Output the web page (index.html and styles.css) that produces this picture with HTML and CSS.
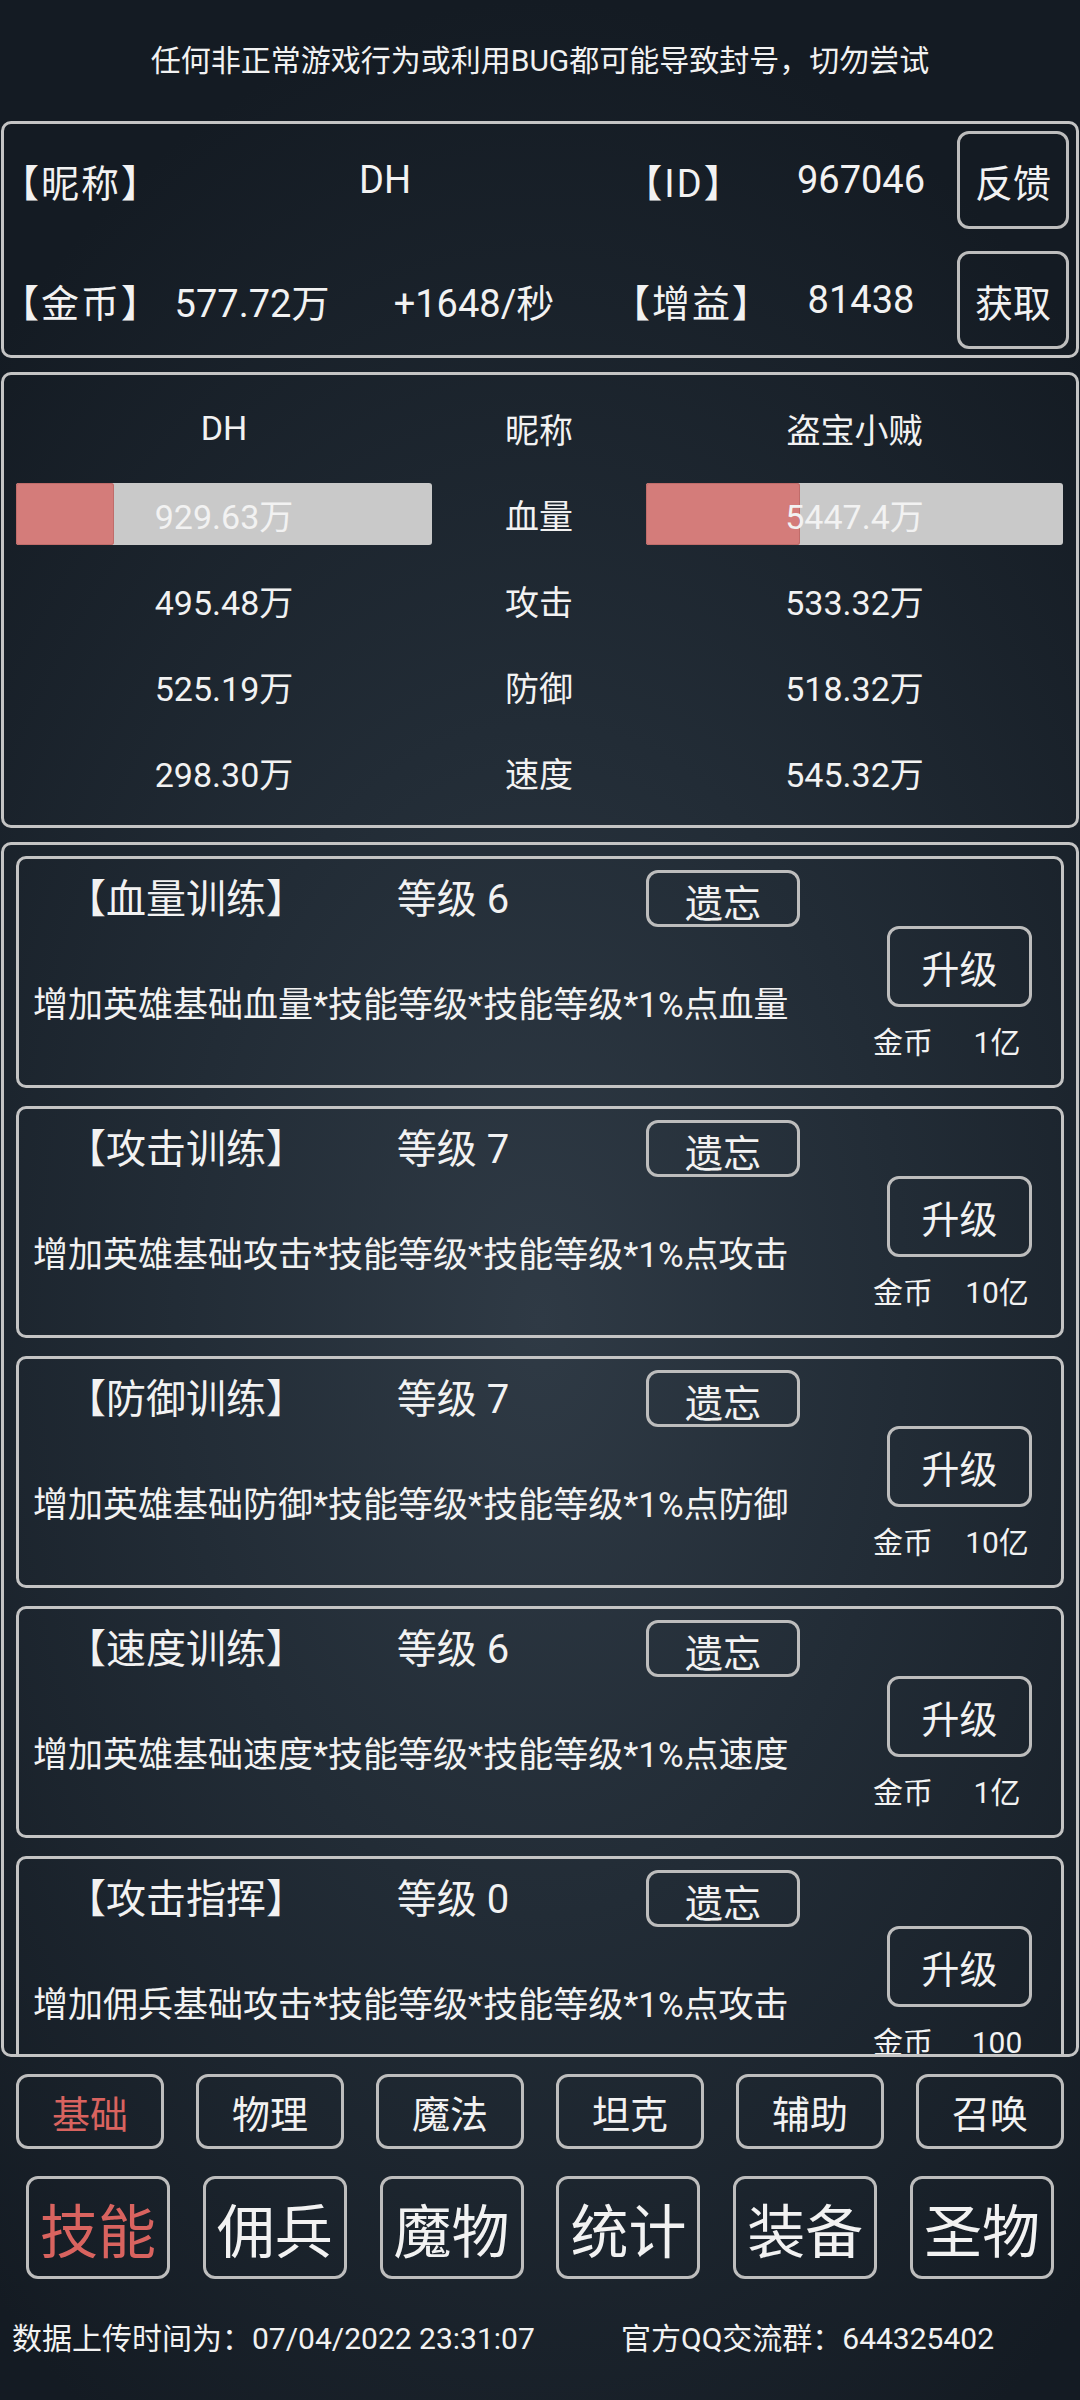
FILE: index.html
```html
<!DOCTYPE html>
<html lang="zh-CN">
<head>
    <meta charset="UTF-8">
    <meta name="viewport" content="width=device-width, initial-scale=1.0">
    <title>技能</title>
    <link rel="stylesheet" href="styles.css">
</head>
<body>
    <div class="notice">任何非正常游戏行为或利用BUG都可能导致封号，切勿尝试</div>

    <div class="panel info">
        <div class="info-row">
            <span class="label">【昵称】</span>
            <span class="val span2">DH</span>
            <span class="label mid">【ID】</span>
            <span class="val num">967046</span>
            <button class="btn side">反馈</button>
        </div>
        <div class="info-row">
            <span class="label">【金币】</span>
            <span class="val">577.72万</span>
            <span class="val">+1648/秒</span>
            <span class="label mid">【增益】</span>
            <span class="val num">81438</span>
            <button class="btn side">获取</button>
        </div>
    </div>

    <div class="panel stats">
        <div class="stat-row">
            <span>DH</span>
            <span>昵称</span>
            <span>盗宝小贼</span>
        </div>
        <div class="stat-row">
            <div class="bar"><div class="fill" style="width: 23.6%;"></div><span>929.63万</span></div>
            <span>血量</span>
            <div class="bar"><div class="fill" style="width: 37%;"></div><span>5447.4万</span></div>
        </div>
        <div class="stat-row">
            <span>495.48万</span>
            <span>攻击</span>
            <span>533.32万</span>
        </div>
        <div class="stat-row">
            <span>525.19万</span>
            <span>防御</span>
            <span>518.32万</span>
        </div>
        <div class="stat-row">
            <span>298.30万</span>
            <span>速度</span>
            <span>545.32万</span>
        </div>
    </div>

    <div class="panel skills">
        <div class="skill">
            <div class="skill-head">
                <span class="skill-name">【血量训练】</span>
                <span class="skill-lv">等级 6</span>
                <button class="btn forget">遗忘</button>
            </div>
            <div class="skill-body">
                <p class="skill-desc">增加英雄基础血量*技能等级*技能等级*1%点血量</p>
                <div class="skill-up">
                    <button class="btn up">升级</button>
                    <div class="cost"><span>金币</span><span>1亿</span></div>
                </div>
            </div>
        </div>

        <div class="skill">
            <div class="skill-head">
                <span class="skill-name">【攻击训练】</span>
                <span class="skill-lv">等级 7</span>
                <button class="btn forget">遗忘</button>
            </div>
            <div class="skill-body">
                <p class="skill-desc">增加英雄基础攻击*技能等级*技能等级*1%点攻击</p>
                <div class="skill-up">
                    <button class="btn up">升级</button>
                    <div class="cost"><span>金币</span><span>10亿</span></div>
                </div>
            </div>
        </div>

        <div class="skill">
            <div class="skill-head">
                <span class="skill-name">【防御训练】</span>
                <span class="skill-lv">等级 7</span>
                <button class="btn forget">遗忘</button>
            </div>
            <div class="skill-body">
                <p class="skill-desc">增加英雄基础防御*技能等级*技能等级*1%点防御</p>
                <div class="skill-up">
                    <button class="btn up">升级</button>
                    <div class="cost"><span>金币</span><span>10亿</span></div>
                </div>
            </div>
        </div>

        <div class="skill">
            <div class="skill-head">
                <span class="skill-name">【速度训练】</span>
                <span class="skill-lv">等级 6</span>
                <button class="btn forget">遗忘</button>
            </div>
            <div class="skill-body">
                <p class="skill-desc">增加英雄基础速度*技能等级*技能等级*1%点速度</p>
                <div class="skill-up">
                    <button class="btn up">升级</button>
                    <div class="cost"><span>金币</span><span>1亿</span></div>
                </div>
            </div>
        </div>

        <div class="skill">
            <div class="skill-head">
                <span class="skill-name">【攻击指挥】</span>
                <span class="skill-lv">等级 0</span>
                <button class="btn forget">遗忘</button>
            </div>
            <div class="skill-body">
                <p class="skill-desc">增加佣兵基础攻击*技能等级*技能等级*1%点攻击</p>
                <div class="skill-up">
                    <button class="btn up">升级</button>
                    <div class="cost"><span>金币</span><span>100</span></div>
                </div>
            </div>
        </div>
    </div>

    <div class="tabs sub">
        <button class="btn active">基础</button>
        <button class="btn">物理</button>
        <button class="btn">魔法</button>
        <button class="btn">坦克</button>
        <button class="btn">辅助</button>
        <button class="btn">召唤</button>
    </div>

    <div class="tabs main">
        <button class="btn active">技能</button>
        <button class="btn">佣兵</button>
        <button class="btn">魔物</button>
        <button class="btn">统计</button>
        <button class="btn">装备</button>
        <button class="btn">圣物</button>
    </div>

    <div class="footer">
        <span>数据上传时间为：07/04/2022 23:31:07</span>
        <span>官方QQ交流群：644325402</span>
    </div>
</body>
</html>
```

FILE: styles.css
```css
* {
    box-sizing: border-box;
}

body {
    margin: 0;
    padding: 0 1px;
    height: 2400px;
    overflow: hidden;
    font-family: Roboto, "Noto Sans CJK SC", sans-serif;
    color: #f2f2f2;
    background: radial-gradient(ellipse 75% 55% at 50% 55%, #2f3a45 0%, #222c36 45%, #141b23 100%);
    background-color: #141b23;
}

.notice {
    height: 121px;
    padding-bottom: 6px;
    display: flex;
    align-items: center;
    justify-content: center;
    font-size: 30px;
}

.panel {
    border: 3px solid #c4c4c4;
    border-radius: 10px;
}

.btn {
    font-family: inherit;
    color: #f2f2f2;
    background: transparent;
    border: 3px solid #bdbdbd;
    border-radius: 12px;
    padding: 0;
    cursor: pointer;
}

.btn.active {
    color: #d9635f;
}

/* 顶部信息 */
.info {
    padding: 7px 7px 6px 0;
    display: flex;
    flex-direction: column;
    gap: 22px;
}

.info-row {
    height: 98px;
    display: grid;
    grid-template-columns: 164px 168px 276px 144px 1fr 112px;
    align-items: center;
    font-size: 38px;
}

.info-row .label {
    margin-left: -3px;
    letter-spacing: 2px;
}

.info-row .mid {
    margin-left: 0;
}

.info-row .mid,
.info-row .val {
    text-align: center;
}

.info-row .span2 {
    grid-column: span 2;
    padding-right: 10px;
}

.info-row .num {
    padding-left: 9px;
}

.btn.side {
    height: 98px;
    font-size: 38px;
}

/* 属性对比 */
.stats {
    margin-top: 14px;
    padding: 10px 13px 10px 12px;
}

.stat-row {
    height: 86px;
    display: grid;
    grid-template-columns: 416px 1fr 417px;
    align-items: center;
    text-align: center;
    font-size: 34px;
}

.bar {
    position: relative;
    height: 62px;
    background-color: #c9c9c9;
    border-radius: 3px;
    display: flex;
    align-items: center;
    justify-content: center;
}

.bar .fill {
    position: absolute;
    left: 0;
    top: 0;
    bottom: 0;
    background-color: #d47c7a;
    border-radius: 3px;
    box-shadow: inset 0 0 0 1px #c06c6a;
}

.bar span {
    position: relative;
    color: #f2f2f2;
}

/* 技能列表 */
.skills {
    margin-top: 14px;
    height: 1215px;
    overflow: hidden;
    padding: 11px 12px 0;
    display: flex;
    flex-direction: column;
    gap: 18px;
}

.skill {
    flex: none;
    height: 232px;
    border: 3px solid #c4c4c4;
    border-radius: 10px;
    display: flex;
    flex-direction: column;
}

.skill-head {
    padding-top: 8px;
    height: 65px;
    display: grid;
    grid-template-columns: 334px 200px 154px;
    align-items: center;
    text-align: center;
    font-size: 40px;
}

.skill-name,
.skill-lv {
    margin-bottom: 5px;
}

.btn.forget {
    margin-left: 93px;
    width: 154px;
    height: 57px;
    font-size: 38px;
}

.skill-head .btn.forget {
    grid-column: 3;
}

.skill-body {
    flex: 1;
    display: flex;
    align-items: center;
    justify-content: space-between;
}

.skill-desc {
    margin: 0 0 6px;
    padding-left: 14px;
    font-size: 35px;
}

.skill-up {
    align-self: flex-start;
    width: 188px;
    margin-right: 17px;
    padding-top: 2px;
    display: flex;
    flex-direction: column;
    align-items: flex-end;
}

.btn.up {
    width: 145px;
    height: 81px;
    margin-right: 12px;
    font-size: 38px;
}

.cost {
    margin-top: 18px;
    width: 100%;
    display: grid;
    grid-template-columns: 94px 94px;
    text-align: center;
    font-size: 30px;
    line-height: 36px;
}

/* 底部标签 */
.tabs {
    display: flex;
    justify-content: space-between;
}

.tabs.sub {
    margin-top: 17px;
    padding: 0 15px;
}

.tabs.sub .btn {
    width: 148px;
    height: 75px;
    font-size: 38px;
}

.tabs.main {
    margin-top: 27px;
    padding: 0 25px;
}

.tabs.main .btn {
    width: 144px;
    height: 103px;
    font-size: 58px;
}

.footer {
    margin-top: 40px;
    padding-left: 11px;
    display: grid;
    grid-template-columns: 609px auto;
    font-size: 30px;
    line-height: 40px;
}
```
